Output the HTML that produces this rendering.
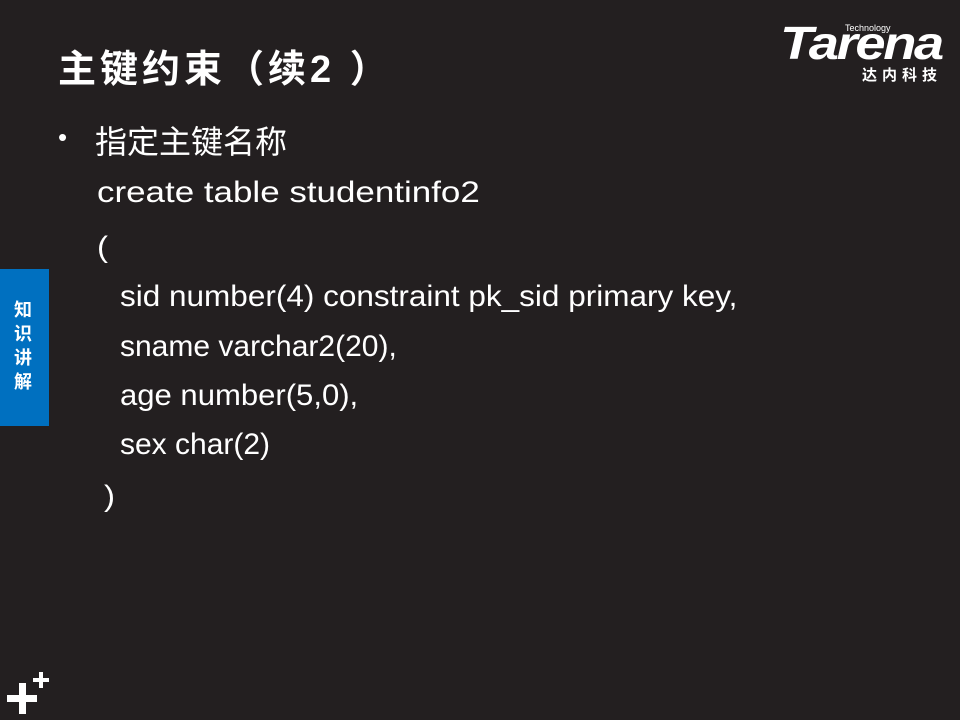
<!DOCTYPE html>
<html><head><meta charset="utf-8"><style>
body{margin:0;width:960px;height:720px;background:#231f20;position:relative;overflow:hidden;font-family:"Liberation Sans","Noto Sans CJK SC",sans-serif;color:#fff}
.t{position:absolute;white-space:nowrap}
.c{position:absolute;white-space:nowrap;font-size:30px;transform:scaleX(1.1);transform-origin:0 0;line-height:34px}
</style></head><body>
<div class="t" style="left:58px;top:38px;font-size:38px;font-weight:bold;letter-spacing:4px">主键约束（续2 ）</div>
<div class="t" style="left:780px;top:20px;font-size:46px;font-weight:bold;font-style:italic;letter-spacing:-2px;line-height:46px;transform:scaleX(1.18);transform-origin:0 0">Tarena</div>
<div class="t" style="left:845px;top:23px;font-size:9px;">Technology</div>
<div class="t" style="left:862px;top:64px;font-size:15px;font-weight:bold;letter-spacing:5px">达内科技</div>
<div class="t" style="left:58px;top:122px;font-size:26px;">•</div>
<div class="t" style="left:95px;top:117px;font-size:32px;">指定主键名称</div>
<div class="c" style="left:97px;top:176px;transform:scaleX(1.165)">create table studentinfo2</div>
<div class="c" style="left:97px;top:231px">(</div>
<div class="c" style="left:120px;top:280px;transform:scaleX(1.05)">sid number(4) constraint pk_sid primary key,</div>
<div class="c" style="left:120px;top:330px;transform:scaleX(1.0)">sname varchar2(20),</div>
<div class="c" style="left:120px;top:379px;transform:scaleX(1.035)">age number(5,0),</div>
<div class="c" style="left:120px;top:428px;transform:scaleX(1.0)">sex char(2)</div>
<div class="c" style="left:104px;top:480px">)</div>
<div style="position:absolute;left:0;top:269px;width:49px;height:157px;background:#0070c0"></div>
<div class="t" style="left:14px;top:298px;font-size:18px;font-weight:bold;line-height:24px;width:20px;white-space:normal">知识讲解</div>
<div style="position:absolute;left:7px;top:695px;width:30px;height:7px;background:#fff"></div>
<div style="position:absolute;left:19px;top:683px;width:7px;height:31px;background:#fff"></div>
<div style="position:absolute;left:33px;top:678px;width:16px;height:4px;background:#fff"></div>
<div style="position:absolute;left:39px;top:672px;width:4px;height:16px;background:#fff"></div>
</body></html>
